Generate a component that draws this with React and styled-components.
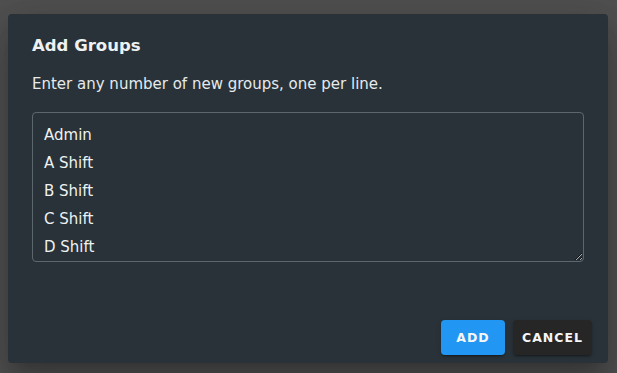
import React from 'react'
import styled, { createGlobalStyle } from 'styled-components'

const GlobalStyle = createGlobalStyle`
  html,
  body {
    margin: 0;
    padding: 0;
    background: #505050;
    font-family: 'DejaVu Sans', Verdana, sans-serif;
    -webkit-font-smoothing: antialiased;
  }
`

const groups = ['Admin', 'A Shift', 'B Shift', 'C Shift', 'D Shift']

function App() {
  return (
    <>
      <GlobalStyle />
      <Backdrop>
        <Dialog>
          <Title>Add Groups</Title>
          <Description>Enter any number of new groups, one per line.</Description>
          <GroupsInput defaultValue={groups.join('\n')} spellCheck={false} />
          <Actions>
            <Button $primary>Add</Button>
            <Button>Cancel</Button>
          </Actions>
        </Dialog>
      </Backdrop>
    </>
  )
}

const Backdrop = styled.div`
  width: 617px;
  height: 373px;
  box-sizing: border-box;
  padding: 14px 0 0 8px;
  overflow: hidden;
`

const Dialog = styled.div`
  width: 600px;
  height: 349px;
  box-sizing: border-box;
  display: flex;
  flex-direction: column;
  background: #283238;
  border-radius: 4px;
  box-shadow: 0 11px 15px -7px rgba(0, 0, 0, 0.2), 0 24px 38px 3px rgba(0, 0, 0, 0.14),
    0 9px 46px 8px rgba(0, 0, 0, 0.12);
  color: #eef1f2;
`

const Title = styled.h2`
  margin: 0;
  padding: 20px 24px 0;
  font-size: 16.5px;
  font-weight: 700;
  line-height: 24px;
`

const Description = styled.p`
  margin: 0;
  padding: 16px 24px 0;
  font-size: 15px;
  line-height: 20px;
  color: #e6eaec;
`

const GroupsInput = styled.textarea`
  display: block;
  margin: 18px 24px 0;
  width: 552px;
  height: 150px;
  box-sizing: border-box;
  padding: 8px 11px 7px;
  background: transparent;
  border: 1px solid #5c676d;
  border-radius: 4px;
  color: #eef1f2;
  font-family: inherit;
  font-size: 15px;
  line-height: 28px;
  resize: vertical;
  outline: none;
`

const Actions = styled.div`
  margin-top: auto;
  display: flex;
  justify-content: flex-end;
  gap: 8px;
  padding: 0 16px 8px;
`

const Button = styled.button`
  height: 35px;
  padding: 0 9px;
  min-width: 64px;
  border: none;
  border-radius: 4px;
  background: ${(p) => (p.$primary ? '#2196f3' : '#262626')};
  color: #f4f6f7;
  font-family: inherit;
  font-size: 12.5px;
  font-weight: 700;
  letter-spacing: 1px;
  text-transform: uppercase;
  box-shadow: 0 3px 1px -2px rgba(0, 0, 0, 0.2), 0 2px 2px 0 rgba(0, 0, 0, 0.14),
    0 1px 5px 0 rgba(0, 0, 0, 0.12);
  cursor: pointer;
`

export default App
